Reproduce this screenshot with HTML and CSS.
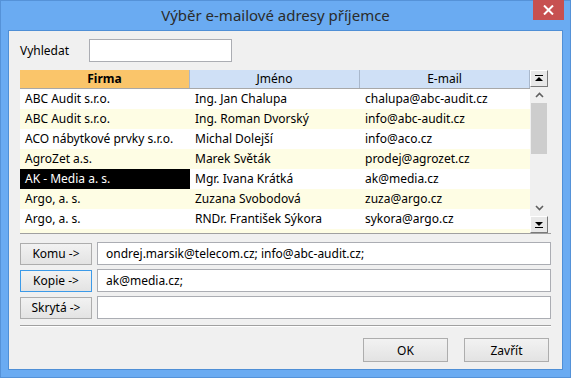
FILE: index.html
```html
<!DOCTYPE html>
<html lang="cs">
<head>
  <meta charset="UTF-8">
  <title>Výběr e-mailové adresy příjemce</title>
  <link rel="stylesheet" href="styles.css">
</head>
<body>
  <div class="window">
    <div class="titlebar">
      <span class="title">Výběr e-mailové adresy příjemce</span>
      <div class="close">
        <svg width="11" height="10" viewBox="0 0 11 10"><path d="M1 0.5 L10 9.5 M10 0.5 L1 9.5" stroke="#fff" stroke-width="2"/></svg>
      </div>
    </div>
    <div class="client">
      <div class="search">
        <label for="q">Vyhledat</label>
        <input type="text" id="q">
      </div>

      <div class="grid">
        <div class="table">
          <div class="row head">
            <div class="cell sorted">Firma</div>
            <div class="cell">Jméno</div>
            <div class="cell">E-mail</div>
          </div>
          <div class="row"><div class="cell">ABC Audit s.r.o.</div><div class="cell">Ing. Jan Chalupa</div><div class="cell">chalupa@abc-audit.cz</div></div>
          <div class="row alt"><div class="cell">ABC Audit s.r.o.</div><div class="cell">Ing. Roman Dvorský</div><div class="cell">info@abc-audit.cz</div></div>
          <div class="row"><div class="cell">ACO nábytkové prvky s.r.o.</div><div class="cell">Michal Dolejší</div><div class="cell">info@aco.cz</div></div>
          <div class="row alt"><div class="cell">AgroZet a.s.</div><div class="cell">Marek Světák</div><div class="cell">prodej@agrozet.cz</div></div>
          <div class="row"><div class="cell selected">AK - Media a. s.</div><div class="cell">Mgr. Ivana Krátká</div><div class="cell">ak@media.cz</div></div>
          <div class="row alt"><div class="cell">Argo, a. s.</div><div class="cell">Zuzana Svobodová</div><div class="cell">zuza@argo.cz</div></div>
          <div class="row"><div class="cell">Argo, a. s.</div><div class="cell">RNDr. František Sýkora</div><div class="cell">sykora@argo.cz</div></div>
          <div class="row alt stub"></div>
        </div>
        <div class="scroll">
          <div class="sbtn">
            <svg width="10" height="8" viewBox="0 0 10 8"><rect x="1" y="0" width="8" height="1" fill="#000"/><path d="M5 2 L9 6 L1 6 Z" fill="#000"/></svg>
          </div>
          <div class="track">
            <div class="arrow">
              <svg width="9" height="6" viewBox="0 0 9 6"><path d="M1 5 L4.5 1.5 L8 5" fill="none" stroke="#606060" stroke-width="1.6"/></svg>
            </div>
            <div class="thumb"></div>
            <div class="rest"></div>
            <div class="arrow">
              <svg width="9" height="6" viewBox="0 0 9 6"><path d="M1 1 L4.5 4.5 L8 1" fill="none" stroke="#606060" stroke-width="1.6"/></svg>
            </div>
          </div>
          <div class="sbtn">
            <svg width="10" height="8" viewBox="0 0 10 8"><path d="M1 1 L9 1 L5 5 Z" fill="#000"/><rect x="1" y="6" width="8" height="1" fill="#000"/></svg>
          </div>
        </div>
      </div>

      <div class="recipients">
        <div class="rrow">
          <div class="btn">Komu -&gt;</div>
          <input type="text" class="field" value="ondrej.marsik@telecom.cz; info@abc-audit.cz;">
        </div>
        <div class="rrow">
          <div class="btn focus">Kopie -&gt;</div>
          <input type="text" class="field" value="ak@media.cz;">
        </div>
        <div class="rrow">
          <div class="btn">Skrytá -&gt;</div>
          <input type="text" class="field" value="">
        </div>
      </div>

      <div class="separator"></div>

      <div class="actions">
        <div class="btn wide">OK</div>
        <div class="btn wide">Zavřít</div>
      </div>
    </div>
  </div>
</body>
</html>
```

FILE: styles.css
```css
body {
  margin: 0;
  font-family: "Noto Sans", "Open Sans", sans-serif;
  font-size: 12px;
  color: #000;
}
.window {
  position: relative;
  width: 571px;
  height: 378px;
  box-sizing: border-box;
  background: #6aabf2;
  border: 1px solid #5592d8;
  padding: 0 7px 7px 7px;
  display: flex;
  flex-direction: column;
}
.titlebar {
  height: 29px;
  display: flex;
  align-items: center;
  justify-content: center;
}
.title {
  font-size: 15px;
  color: #2b2b2b;
  margin-top: -1px;
  margin-left: -20px;
}
.close {
  position: absolute;
  top: -1px;
  right: 6px;
  width: 31px;
  height: 20px;
  background: #c75050;
  display: flex;
  align-items: center;
  justify-content: center;
}
.client {
  flex: 1;
  background: #f0f0f0;
  border: 1px solid #4f8fd6;
  padding: 8px 11px 0 11px;
}
.search {
  display: flex;
  align-items: center;
  height: 23px;
}
.search label {
  width: 69px;
}
input[type="text"] {
  box-sizing: border-box;
  border: 1px solid #abadb3;
  background: #fff;
  font-family: inherit;
  font-size: 12px;
  padding: 0 8px;
  outline: none;
  color: #000;
}
.search input {
  width: 143px;
  height: 23px;
}
.grid {
  display: flex;
  margin-top: 8px;
  height: 163px;
  border-bottom: 1px solid #a0a0a0;
}
.table {
  width: 510px;
  overflow: hidden;
}
.row {
  display: grid;
  grid-template-columns: 170px 170px 170px;
  height: 20px;
  background: #fff;
}
.row.alt {
  background: #fefde4;
}
.cell {
  padding: 0 5px;
  line-height: 20px;
  white-space: nowrap;
  overflow: hidden;
}
.cell.selected {
  background: #000;
  color: #fff;
}
.row.head {
  height: 18px;
  border-bottom: 1px solid #a8a8a8;
  background: #cfe0f6;
}
.row.head .cell {
  line-height: 18px;
  text-align: center;
  border-right: 1px solid #a9b8cc;
}
.row.head .cell.sorted {
  background: #fac56a;
  font-weight: bold;
}
.row.stub {
  height: 4px;
}
.scroll {
  width: 18px;
  display: flex;
  flex-direction: column;
}
.sbtn {
  height: 17px;
  box-sizing: border-box;
  border: 1px solid #7a7a7a;
  border-top-color: #fff;
  border-left-color: #fff;
  background: #e8e8e8;
  display: flex;
  align-items: center;
  justify-content: center;
}
.track {
  flex: 1;
  background: #f0f0f0;
  display: flex;
  flex-direction: column;
}
.arrow {
  height: 16px;
  display: flex;
  align-items: center;
  justify-content: center;
}
.thumb {
  height: 51px;
  background: #cdcdcd;
  margin: 0 1px;
}
.rest {
  flex: 1;
}
.recipients {
  margin-top: 8px;
  display: flex;
  flex-direction: column;
  gap: 4px;
}
.rrow {
  display: flex;
  align-items: center;
  gap: 5px;
}
.btn {
  box-sizing: border-box;
  height: 22px;
  width: 72px;
  border: 1px solid #adadad;
  background: linear-gradient(#f2f2f2, #e3e3e3);
  font-size: 12px;
  color: #000;
  display: flex;
  align-items: center;
  justify-content: center;
}
.btn.focus {
  border-color: #3c9ae8;
}
.field {
  width: 454px;
  height: 23px;
}
.separator {
  margin-top: 6px;
  height: 0;
  border-top: 1px solid #a0a0a0;
  border-bottom: 1px solid #fff;
  width: 531px;
}
.actions {
  display: flex;
  justify-content: flex-end;
  gap: 16px;
  margin-top: 11px;
  width: 529px;
}
.btn.wide {
  width: 85px;
  height: 24px;
}
```
